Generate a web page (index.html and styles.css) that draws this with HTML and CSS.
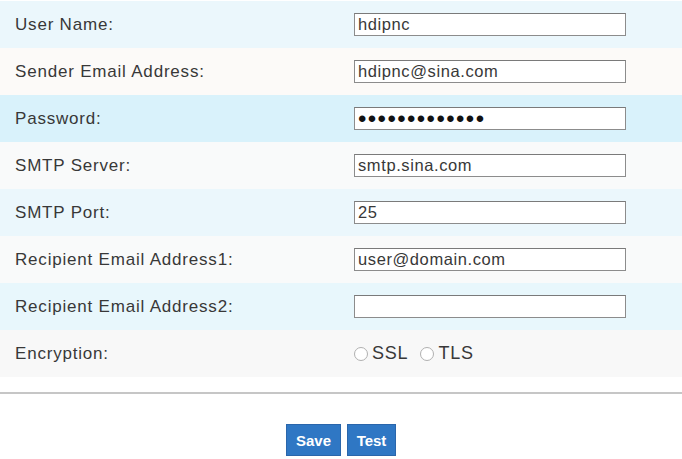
FILE: index.html
```html
<!DOCTYPE html>
<html>
<head>
<meta charset="utf-8">
<link rel="stylesheet" href="styles.css">
</head>
<body>
<div class="form">
  <div class="row blue">
    <div class="label">User Name:</div>
    <div class="field"><input class="box" type="text" value="hdipnc"></div>
  </div>
  <div class="row warm">
    <div class="label">Sender Email Address:</div>
    <div class="field"><input class="box" type="text" value="hdipnc@sina.com"></div>
  </div>
  <div class="row deep">
    <div class="label">Password:</div>
    <div class="field"><input class="box pass" type="password" value="1234567890123"></div>
  </div>
  <div class="row white">
    <div class="label">SMTP Server:</div>
    <div class="field"><input class="box" type="text" value="smtp.sina.com"></div>
  </div>
  <div class="row blue">
    <div class="label">SMTP Port:</div>
    <div class="field"><input class="box" type="text" value="25"></div>
  </div>
  <div class="row white">
    <div class="label">Recipient Email Address1:</div>
    <div class="field"><input class="box" type="text" value="user@domain.com"></div>
  </div>
  <div class="row blue2">
    <div class="label">Recipient Email Address2:</div>
    <div class="field"><input class="box" type="text" value=""></div>
  </div>
  <div class="row grey">
    <div class="label">Encryption:</div>
    <div class="field radios">
      <label class="opt"><span class="dot"></span>SSL</label>
      <label class="opt"><span class="dot"></span>TLS</label>
    </div>
  </div>
</div>
<div class="rule"></div>
<div class="actions">
  <button class="btn save">Save</button>
  <button class="btn">Test</button>
</div>
</body>
</html>
```

FILE: styles.css
```css
html, body {
  margin: 0;
  padding: 0;
  background: #ffffff;
}
body {
  font-family: "Liberation Sans", Arial, sans-serif;
  color: #333333;
  width: 682px;
  height: 459px;
  overflow: hidden;
}
.form {
  display: flex;
  flex-direction: column;
  padding-top: 1px;
}
.row {
  display: flex;
  align-items: center;
  height: 47px;
}
.blue { background: #ebf7fc; }
.warm { background: #fcfaf8; }
.deep { background: #d9f2fb; }
.white { background: #f9fafa; }
.blue2 { background: #e8f7fc; }
.grey { background: #f8f8f8; }
.label {
  width: 341px;
  box-sizing: border-box;
  padding-left: 15px;
  font-size: 17px;
  letter-spacing: 0.8px;
  color: #383838;
}
.field {
  padding-left: 13px;
  display: flex;
  align-items: center;
}
.box {
  width: 272px;
  height: 23px;
  box-sizing: border-box;
  border: 1px solid #8c8c8c;
  border-top-color: #7a7a7a;
  background: #ffffff;
  margin: 0;
  padding: 0 3px;
  font-family: "Liberation Sans", Arial, sans-serif;
  font-size: 16.5px;
  letter-spacing: 0.6px;
  color: #383838;
  outline: none;
}
.pass {
  font-size: 24px;
  line-height: 21px;
  letter-spacing: 1.4px;
  color: #111111;
}
.radios {
  gap: 12px;
}
.opt {
  display: flex;
  align-items: center;
  font-size: 18px;
  letter-spacing: 0.8px;
  color: #383838;
}
.dot {
  width: 14px;
  height: 14px;
  box-sizing: border-box;
  border: 1px solid #b0b0b0;
  border-radius: 50%;
  background: #ffffff;
  margin-right: 4px;
}
.rule {
  margin-top: 15px;
  height: 2px;
  background: #c6c6c6;
}
.actions {
  display: flex;
  justify-content: center;
  gap: 6px;
  margin-top: 30px;
}
.btn {
  height: 32px;
  width: 49px;
  border: 1px solid #2a66ab;
  background: #2f77c4;
  color: #ffffff;
  font-family: "Liberation Sans", Arial, sans-serif;
  font-size: 15px;
  font-weight: bold;
  padding: 0;
  margin: 0;
}
.save {
  width: 55px;
}
```
